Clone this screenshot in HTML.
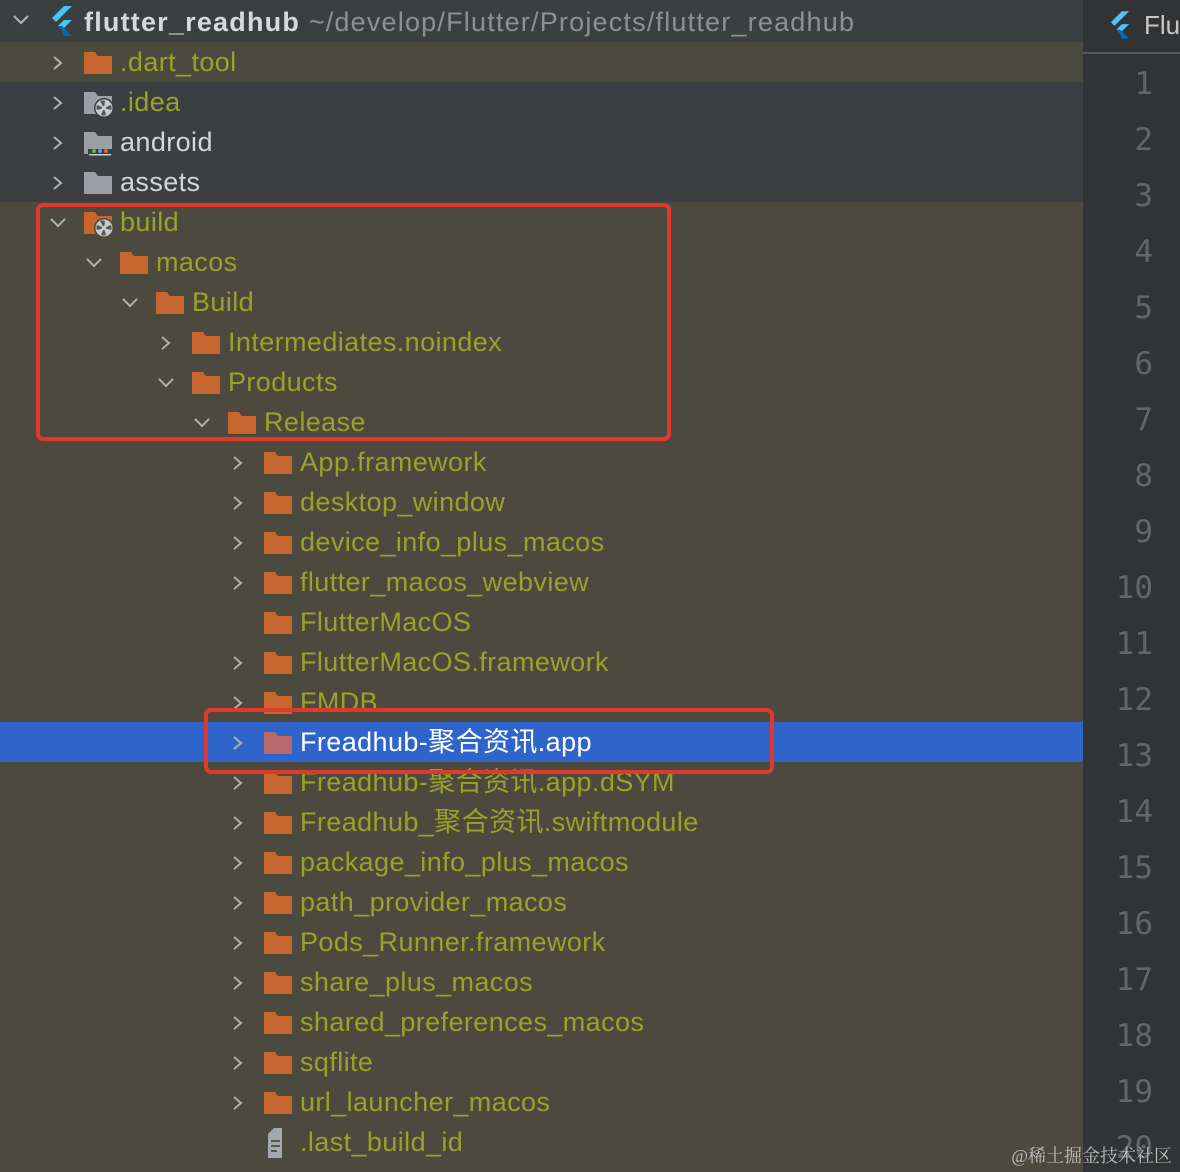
<!DOCTYPE html>
<html><head><meta charset="utf-8">
<style>
*{margin:0;padding:0;box-sizing:border-box}
body{width:1180px;height:1172px;overflow:hidden;background:#4c493e;position:relative;font-family:"Liberation Sans","Noto Sans CJK SC",sans-serif}
.bg{position:absolute;left:0;width:1083px}
.row{position:absolute;left:0;width:1083px;height:40px}
.t{position:absolute;top:5px;font-size:27px;letter-spacing:0.4px;line-height:30px;color:#9aa228;white-space:nowrap}
.w{color:#d6d6d6}
.chev{position:absolute;top:13px}
.fold{position:absolute;top:9px}
.gut{position:absolute;left:1083px;top:0;width:97px;height:1172px;background:#313335}
.ln{position:absolute;right:27px;font-family:"DejaVu Sans Mono",monospace;font-size:31px;color:#62666a;line-height:36px}
.box{position:absolute;border:4px solid #e2382b;border-radius:7px}
</style></head><body>
<div class="bg" style="top:0;height:42px;background:#3c3f41"></div>
<div class="bg" style="top:42px;height:40px;background:#4b4a3f"></div>
<div class="bg" style="top:82px;height:120px;background:#3c3f41"></div>
<div class="bg" style="top:722px;height:40px;background:#2f65ca"></div>

<svg style="position:absolute;left:12px;top:14px" width="18" height="12"><polyline points="2,2 9,9 16,2" fill="none" stroke="#b5b5b5" stroke-width="2"/></svg>
<svg style="position:absolute;left:50px;top:6px" width="24" height="30" viewBox="0 0 24 30"><polygon points="14,0 22,0 6,16 2,12" fill="#47c5fb"/><polygon points="14,14 22,14 12,24 8,20" fill="#47c5fb"/><polygon points="8,20 12,24 14,30 22,30 12,20" fill="#0569b8"/></svg>
<div style="position:absolute;left:84px;top:7px;font-size:27px;letter-spacing:1.2px;line-height:30px;font-weight:bold;color:#d8d8d8;white-space:nowrap">flutter_readhub <span style="font-weight:normal;color:#8e9092">~/develop/Flutter/Projects/flutter_readhub</span></div>

<div id="rows"></div>

<div class="gut">
<div style="position:absolute;left:0;top:52px;width:97px;height:2px;background:#55585b"></div>
<svg style="position:absolute;left:26px;top:11px" width="22" height="28" viewBox="0 0 24 30"><polygon points="14,0 22,0 6,16 2,12" fill="#47c5fb"/><polygon points="14,14 22,14 12,24 8,20" fill="#47c5fb"/><polygon points="8,20 12,24 14,30 22,30 12,20" fill="#0569b8"/></svg>
<div style="position:absolute;left:61px;top:10px;font-size:26px;color:#c8c8c8">Flu</div>
</div>

<div class="box" style="left:36px;top:203px;width:635px;height:238px"></div>
<div class="box" style="left:204px;top:708px;width:570px;height:66px"></div>
<div style="position:absolute;right:8px;top:1142px;font-size:18px;color:#bdbdbd;font-family:'Liberation Serif','Noto Serif CJK SC',serif">@稀土掘金技术社区</div>

<script>
const folderO='#c6652d',folderG='#9ba0a5';
function folder(c,extra){return `<svg class="fold" style="overflow:visible" width="30" height="24" viewBox="0 0 30 24"><path d="M0 1h11l3 4h14v18H0z" fill="${c}"/>${extra||''}</svg>`}
function gear(bg){return `<circle cx="20" cy="17" r="10" fill="${bg}"/><circle cx="20" cy="17" r="8.5" fill="#c9cbcd"/><g fill="#555"><path d="M20 17 L16 10 Q19 9 21 10z"/><path d="M20 17 L27 14 Q28 17 27 19z"/><path d="M20 17 L22 24 Q19 25 17 24z"/><path d="M20 17 L13 19 Q12 16 13 14z"/></g><circle cx="20" cy="17" r="2" fill="#c9cbcd"/>`}
const dots='<rect x="4" y="18" width="24" height="6" fill="#3c3f41"/><circle cx="10" cy="20" r="2" fill="#6ab04c"/><circle cx="16" cy="20" r="2" fill="#4aa3df"/><circle cx="22" cy="20" r="2" fill="#e0643c"/><rect x="5" y="23" width="22" height="1.5" fill="#ccc"/>';
const file='<svg class="fold" style="top:6px" width="30" height="30" viewBox="0 0 30 30"><path d="M6 0h14v30H6z" fill="#a3a8ad"/><path d="M6 0h6L6 6z" fill="#4c493e"/><rect x="9" y="12" width="9" height="2" fill="#555"/><rect x="9" y="17" width="9" height="2" fill="#555"/><rect x="9" y="22" width="6" height="2" fill="#555"/></svg>';
function chev(open){return open?`<svg class="chev" style="top:15px" width="18" height="12"><polyline points="2,2 9,9 16,2" fill="none" stroke="#b0b0b0" stroke-width="2"/></svg>`:`<svg class="chev" width="12" height="16"><polyline points="2,2 9,8 2,14" fill="none" stroke="#b0b0b0" stroke-width="2"/></svg>`}
const R=[
[0,'.dart_tool','c',folderO,''],
[0,'.idea','c',folderG,gear('#3c3f41')],
[0,'android','c',folderG,dots,1],
[0,'assets','c',folderG,'',1],
[0,'build','o',folderO,gear('#4c493e')],
[1,'macos','o'],[2,'Build','o'],[3,'Intermediates.noindex','c'],[3,'Products','o'],[4,'Release','o'],
[5,'App.framework','c'],[5,'desktop_window','c'],[5,'device_info_plus_macos','c'],[5,'flutter_macos_webview','c'],[5,'FlutterMacOS','n'],[5,'FlutterMacOS.framework','c'],[5,'FMDB','c'],
[5,'Freadhub-聚合资讯.app','c','#b86a6a','',1],
[5,'Freadhub-聚合资讯.app.dSYM','c'],[5,'Freadhub_聚合资讯.swiftmodule','c'],[5,'package_info_plus_macos','c'],[5,'path_provider_macos','c'],[5,'Pods_Runner.framework','c'],[5,'share_plus_macos','c'],[5,'shared_preferences_macos','c'],[5,'sqflite','c'],[5,'url_launcher_macos','c'],[5,'.last_build_id','f']
];
let h='';
R.forEach((r,i)=>{const [L,name,st,col,ex,white]=r;const top=42+40*i;const cx=(st=='o'?49:52)+36*L,fx=84+36*L,tx=120+36*L;
let s=`<div class="row" style="top:${top}px">`;
if(st=='o'||st=='c')s+=`<div style="position:absolute;left:${cx}px;top:0">${chev(st=='o')}</div>`;
s+=`<div style="position:absolute;left:${fx-(st=='f'?2:0)}px;top:0">${st=='f'?file:folder(col||folderO,ex)}</div>`;
s+=`<div class="t${white?' w':''}" style="left:${tx}px;${i==17?'color:#fff':''}">${name}</div></div>`;h+=s});
document.getElementById('rows').innerHTML=h;
let g='';for(let n=1;n<=20;n++){g+=`<div class="ln" style="top:${66+56*(n-1)}px">${n}</div>`}
document.querySelector('.gut').insertAdjacentHTML('beforeend',g);
</script>
</body></html>
